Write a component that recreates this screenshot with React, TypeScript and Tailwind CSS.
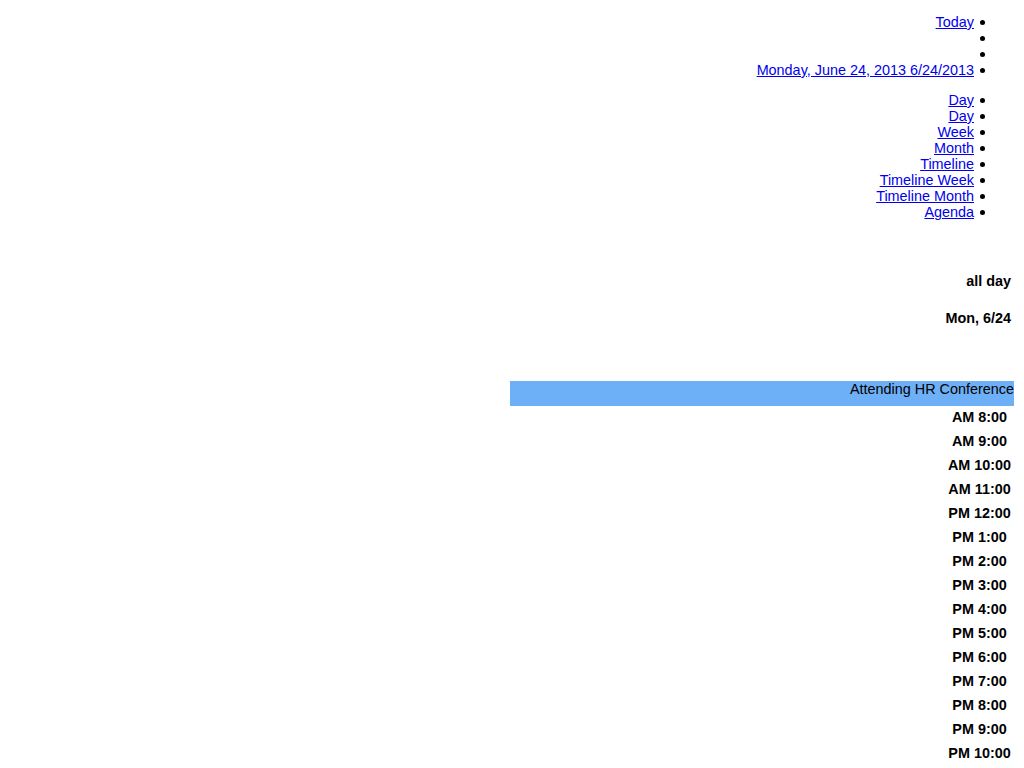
const navTop = ['Today', '', '', 'Monday, June 24, 2013 6/24/2013'];
const views = ['Day', 'Day', 'Week', 'Month', 'Timeline', 'Timeline Week', 'Timeline Month', 'Agenda'];
const hours = [
  'AM 8:00', 'AM 9:00', 'AM 10:00', 'AM 11:00', 'PM 12:00', 'PM 1:00', 'PM 2:00', 'PM 3:00',
  'PM 4:00', 'PM 5:00', 'PM 6:00', 'PM 7:00', 'PM 8:00', 'PM 9:00', 'PM 10:00',
];

const Bullet = () => <span className="ml-[6px] mr-[39px] w-[5px] h-[5px] rounded-full bg-black shrink-0" />;

const NavList = ({ items }: { items: string[] }) => (
  <ul className="flex flex-col items-end">
    {items.map((label, i) => (
      <li key={i} className="flex items-center justify-end h-4 leading-4">
        {label && (
          <a href="#" className="text-[#0000ee] underline">
            {label}
          </a>
        )}
        <Bullet />
      </li>
    ))}
  </ul>
);

export default function App() {
  return (
    <div className="bg-white w-[1024px] h-[768px] overflow-hidden text-[14.4px] text-black font-['Liberation_Sans',Arial,sans-serif]">
      <div className="pt-[14px] flex flex-col gap-[14px]">
        <NavList items={navTop} />
        <NavList items={views} />
      </div>

      <div className="mt-[53px] flex flex-col items-end pr-[13px] font-bold">
        <div className="h-4 leading-4">all day</div>
        <div className="mt-[21px] h-4 leading-4">Mon, 6/24</div>
      </div>

      <div className="mt-[55px] flex justify-end pr-[10px]">
        <div className="w-[504px] h-[25px] bg-[#6eb0f8] text-right leading-4">Attending HR Conference</div>
      </div>

      <div className="flex flex-col items-end pr-[10px] font-bold">
        {hours.map((h) => (
          <div key={h} className="w-[69px] h-6 leading-4 text-center pt-[3px]">
            {h}
          </div>
        ))}
      </div>
    </div>
  );
}
